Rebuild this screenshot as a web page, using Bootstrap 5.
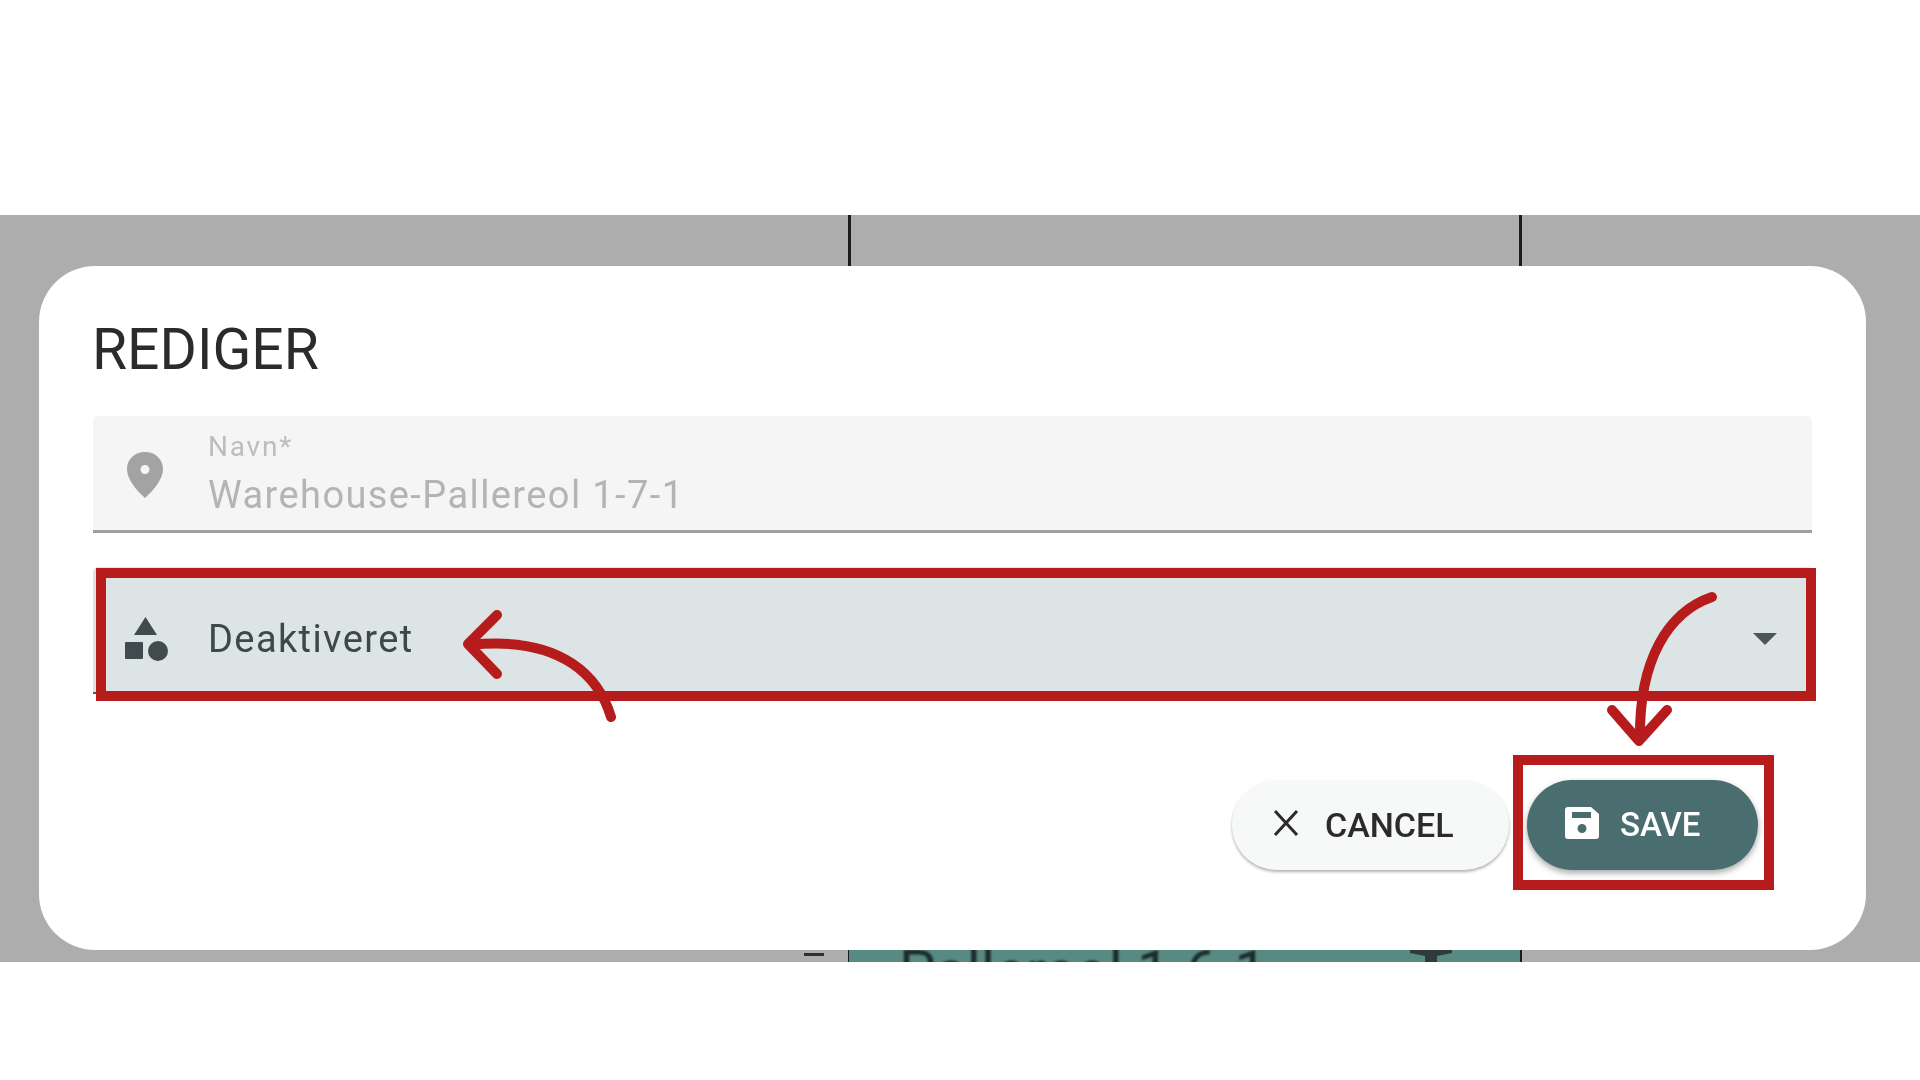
<!DOCTYPE html>
<html lang="en">
<head>
    <meta charset="UTF-8">
    <title>Rediger</title>
    <link href="https://cdn.jsdelivr.net/npm/bootstrap@5.3.0/dist/css/bootstrap.min.css" rel="stylesheet">
    <style>
        body { background: #fff; font-family: Roboto, sans-serif; height: 1080px; overflow: hidden; }
        .stage { position: relative; width: 1920px; height: 1080px; padding-top: 215px; }
        .backdrop { position: relative; height: 747px; background: #adadad; padding: 51px 54px 12px 39px; overflow: hidden; }
        /* table behind the dialog */
        .behind-line { position: absolute; top: 0; bottom: 0; width: 3px; background: #1c1c1c; }
        .behind-row { position: absolute; left: 849px; width: 671px; top: 735px; height: 60px; background: #578a82; }
        .behind-text { position: absolute; left: 50px; top: -8px; font-size: 58px; line-height: 1; color: #1d2a2a; white-space: nowrap; filter: blur(.8px); }
        .behind-tick { position: absolute; left: 804px; top: 738px; width: 20px; height: 3px; background: #2a2f3a; filter: blur(.6px); }
        .dialog { position: relative; height: 684px; background: #fff; border-radius: 56px; padding: 0 54px; }
        .soft { filter: blur(.7px); }
        .dialog-title { font-size: 57px; font-weight: 400; color: #2b2b2b; margin: 0 0 0 -1px; height: 150px; line-height: 1; padding-top: 55px; }
        .field { display: flex; align-items: center; height: 117px; background: #f5f5f5; border-bottom: 3px solid #a0a0a0; border-radius: 5px 5px 0 0; }
        .field-icon { width: 115px; flex: none; display: flex; justify-content: center; padding-right: 12px; margin-top: 3px; }
        .field-label { font-size: 28px; letter-spacing: 1.8px; color: #bdbdbd; line-height: 1; margin-bottom: 15px; }
        .field-value { font-size: 38px; letter-spacing: 1.4px; color: #b4b4b4; line-height: 1; }
        .field-select { position: relative; height: 127px; margin-top: 34px; padding-top: 19px; background: #dce4e5; border-bottom: 2px solid #555; }
        .field-select .field-icon { padding-right: 7px; margin-top: 0; }
        .select-value { font-size: 38px; letter-spacing: 1.4px; color: #3c484a; line-height: 1; }
        .select-caret { position: absolute; right: 35px; top: 66px; width: 0; height: 0; border: 12px solid transparent; border-top: 12px solid #4a5658; border-bottom: 0; }
        .mark-box { position: absolute; border: 10px solid #b71c1c; pointer-events: none; }
        .mark-select { left: 57px; top: 302px; width: 1720px; height: 133px; }
        .mark-save { left: 1474px; top: 489px; width: 261px; height: 135px; }
        .dialog-actions { display: flex; justify-content: flex-end; gap: 18px; padding-right: 54px; margin-top: 86px; }
        .pill-btn { display: flex; align-items: center; height: 90px; border: 0; border-radius: 45px; font-family: Roboto, sans-serif; font-size: 34px; font-weight: 500; }
        .pill-btn svg { margin-top: -4px; }
        .pill-cancel { width: 277px; padding-left: 41px; gap: 26px; background: #f7f8f8; color: #2b2b2b; box-shadow: 0 2px 3px rgba(0,0,0,.3); }
        .pill-save { width: 231px; padding-left: 38px; gap: 21px; background: #4a6e70; color: #fff; box-shadow: 0 3px 6px rgba(0,0,0,.35); font-size: 33px; }
        .arrows { position: absolute; left: 0; top: 0; pointer-events: none; }
    </style>
</head>
<body>
<div class="stage">
    <div class="backdrop">
        <div class="behind-line" style="left: 848px"></div>
        <div class="behind-line" style="left: 1519px"></div>
        <div class="behind-tick"></div>
        <div class="behind-row">
            <div class="behind-text">Pallereol 1-6-1</div>
            <svg class="position-absolute soft" style="left: 561px; top: 0" width="42" height="12" viewBox="0 0 42 12"><path fill="#2f3a3a" d="M0 0h42v3L27 6v6H15V6L0 3z"/></svg>
        </div>

        <div class="dialog">
            <h1 class="dialog-title soft">REDIGER</h1>

            <div class="field">
                <div class="field-icon soft">
                    <svg width="38" height="46" viewBox="0 0 38 46"><path fill="#a3a3a3" fill-rule="evenodd" d="M19 0C8.500 0 1 7.500 1 17c0 10 9 21 18 29 9-8 18-19 18-29C37 7.500 29.500 0 19 0zm0 13a4.500 4.500 0 1 1 0 9 4.500 4.500 0 0 1 0-9z"/></svg>
                </div>
                <div class="soft">
                    <div class="field-label">Navn*</div>
                    <div class="field-value">Warehouse-Pallereol 1-7-1</div>
                </div>
            </div>

            <div class="field field-select">
                <div class="field-icon soft">
                    <svg width="44" height="44" viewBox="0 0 44 44"><g fill="#3f4b4d"><path d="M20.500 0 32 18H9z"/><rect x="0" y="25" width="18" height="17" rx="1"/><circle cx="33" cy="34" r="10"/></g></svg>
                </div>
                <div class="select-value soft">Deaktiveret</div>
                <div class="select-caret soft"></div>
            </div>

            <div class="dialog-actions">
                <button class="pill-btn pill-cancel soft" type="button">
                    <svg width="26" height="28" viewBox="0 0 26 28"><path d="M2 2l22 24M24 2 2 26" stroke="#2b2b2b" stroke-width="3" fill="none"/></svg>
                    CANCEL
                </button>
                <button class="pill-btn pill-save soft" type="button">
                    <svg width="34" height="32" viewBox="0 0 34 32"><path fill="#fff" fill-rule="evenodd" d="M3 0h23l8 7v22a3 3 0 0 1-3 3H3a3 3 0 0 1-3-3V3a3 3 0 0 1 3-3zm4 5v6h19V5zm10 12a4.500 4.500 0 1 0 0 9 4.500 4.500 0 0 0 0-9z"/></svg>
                    SAVE
                </button>
            </div>

            <div class="mark-box mark-select"></div>
            <div class="mark-box mark-save"></div>
        </div>
    </div>

    <svg class="arrows" width="1920" height="1080" fill="none" stroke="#b71c1c" stroke-width="10" stroke-linecap="round" stroke-linejoin="round">
        <path d="M611 717C600 680 565 635 470 645"/>
        <path d="M497 615 468 644 497 674"/>
        <path d="M1712 597C1668 612 1639 660 1640 738"/>
        <path d="M1612 710 1639 741 1667 710"/>
    </svg>
</div>
<script src="https://cdn.jsdelivr.net/npm/bootstrap@5.3.0/dist/js/bootstrap.bundle.min.js"></script>
</body>
</html>
